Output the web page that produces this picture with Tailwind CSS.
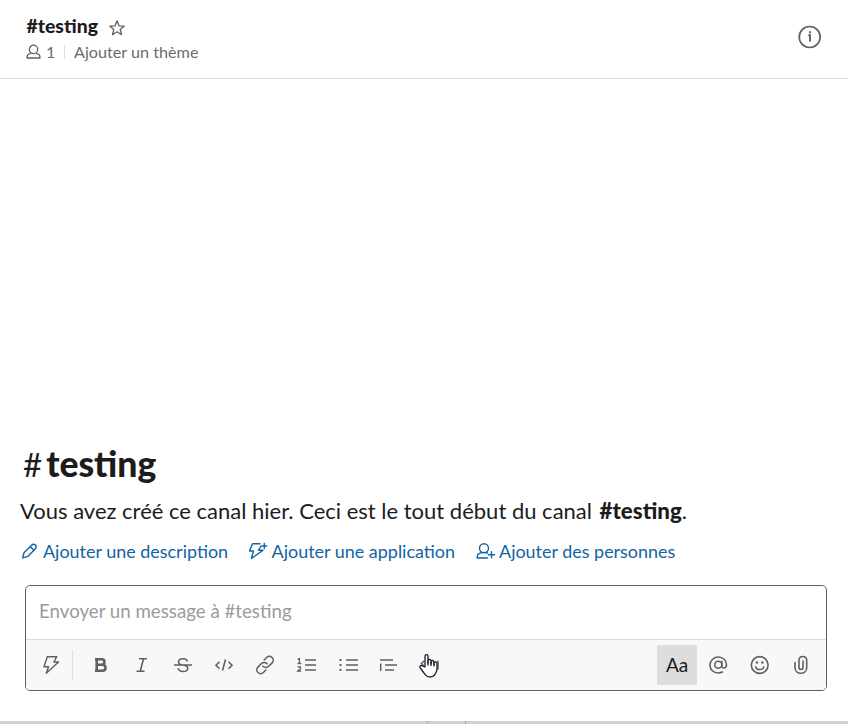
<!DOCTYPE html>
<html lang="fr">
<head>
<meta charset="utf-8">
<title>#testing</title>
<script src="https://cdn.jsdelivr.net/npm/@tailwindcss/browser@4"></script>
</head>
<body class="bg-white font-['Lato',sans-serif] text-[#1d1c1d]">
<div class="flex h-[724px] w-[848px] flex-col overflow-hidden">
  <header class="flex h-[79px] shrink-0 justify-between border-b border-[#dddddd] pl-[26px] pr-[26px]">
    <div class="pt-[14px]">
      <div class="flex h-6 items-center gap-[10px] pl-[0.5px]">
        <h1 class="whitespace-nowrap text-[19.4px] font-black leading-6">#testing</h1>
        <svg class="mt-[3px] size-[18px]" viewBox="0 0 18 18" fill="none" stroke="#616061" stroke-width="1.3" stroke-linejoin="round"><path d="M9 1.800l2 5 5.200.3-4 3.400 1.300 5.200L9 12.800l-4.500 2.900 1.300-5.200-4-3.400 5.200-.3z"/></svg>
      </div>
      <div class="mt-[3px] flex h-[22px] items-center text-[16.2px] leading-[22px] text-[#6c6b6c]">
        <svg class="h-4 w-[15px]" viewBox="0 0 15 16" fill="none" stroke="#616061" stroke-width="1.3" stroke-linejoin="round"><circle cx="7.500" cy="5.400" r="4.200"/><path d="M5 9.300l-2.200.7C1.500 10.500 1 12 1 14h13c0-2-.5-3.500-1.800-4L10 9.300"/></svg>
        <span class="ml-[5px] w-[9px]">1</span>
        <span class="ml-[9px] h-[14px] w-px bg-[#dddddd]"></span>
        <span class="ml-[9px] whitespace-nowrap">Ajouter un thème</span>
      </div>
    </div>
    <svg class="mt-[25px] size-6" viewBox="0 0 24 24" fill="none" stroke="#616061"><circle cx="11.700" cy="12" r="10.500" stroke-width="1.700"/><path d="M10.300 10.200H12v6.300" stroke-width="1.900"/><path d="M11 7.300h2" stroke-width="2"/></svg>
  </header>

  <main class="flex min-h-0 flex-1 flex-col justify-end">
    <section class="h-[143px]">
      <h2 class="flex h-[44px] items-center whitespace-nowrap pl-[23px] text-[35.500px] font-black leading-[44px]"><span class="mr-[4px] text-[33px] font-normal">#</span>testing</h2>
      <p class="mt-[10px] h-[30px] whitespace-nowrap pl-5 text-[22px] leading-[30px]">Vous avez créé ce canal hier. Ceci est le tout début du canal <b class="ml-[2px] text-[22.300px] font-black">#testing</b>.</p>
      <div class="mt-[13px] flex h-6 items-center whitespace-nowrap pl-[21px] text-[17.950px] leading-6 text-[#1264a3]">
        <a class="flex items-center"><svg class="mr-[4px] size-[18px]" viewBox="0 0 18 18" fill="none" stroke="#1264a3" stroke-width="1.400" stroke-linejoin="round" stroke-linecap="round"><path d="M1.700 15.800l1.300-5 7.500-7.500c2.800-2.800 6.500.8 3.700 3.600l-7.500 7.500zM9.200 4.600l3.800 3.600"/></svg>Ajouter une description</a>
        <a class="ml-[20px] flex items-center"><svg class="mr-[3.500px] h-[18px] w-5" viewBox="0 0 20 18" fill="none" stroke="#1264a3" stroke-width="1.400" stroke-linejoin="round" stroke-linecap="round"><path d="M12 1.800H4.500L1.500 9h4l-2 7.500L15 8.300h-4.500L13 4M16.300 1.500v5M13.800 4h5"/></svg>Ajouter une application</a>
        <a class="ml-[20.500px] flex items-center"><svg class="mr-[3.500px] h-[18px] w-5" viewBox="0 0 20 18" fill="none" stroke="#1264a3" stroke-width="1.400" stroke-linejoin="round" stroke-linecap="round"><circle cx="8" cy="6.200" r="4.500"/><path d="M11.500 16H1.200c0-2.500.5-3.900 1.800-4.300l2.500-1M10.500 10.700l1 .5M15.500 9.800v6M12.500 12.800h6"/></svg>Ajouter des personnes</a>
      </div>
    </section>

    <div class="ml-[25px] flex h-[106px] w-[802px] shrink-0 flex-col overflow-hidden rounded-[5px] border border-[#616061]">
      <div class="h-[53px] whitespace-nowrap pl-[13px] pt-[12px] text-[18.700px] leading-[26px] text-[#9b9b9b]">Envoyer un message à #testing</div>
      <div class="flex flex-1 items-center border-t border-[#dddddd] bg-[#f8f8f8] pl-[5px] pr-[5px] text-[#616061]">
        <button class="grid size-10 place-items-center"><svg class="size-5" viewBox="0 0 20 20" fill="none" stroke="currentColor" stroke-width="1.400" stroke-linejoin="round"><path d="M6.300 1.700h9.500l-3 5.300h4.700L5.300 18.200l2.200-6.500H3z"/></svg></button>
        <span class="ml-[1px] h-[30px] w-px bg-[#dddddd]"></span>
        <div class="ml-[8px] flex gap-[1.100px]">
          <button class="grid size-10 place-items-center"><svg class="size-5" viewBox="0 0 20 20" fill="none" stroke="currentColor" stroke-width="2.600"><path d="M4 4.300h6.700c3.700 0 3.700 5.400 0 5.400H5.500h5.800c4.300 0 4.300 6 0 6H4M5.700 3v14"/></svg></button>
          <button class="grid size-10 place-items-center"><svg class="size-5" viewBox="0 0 20 20" fill="none" stroke="currentColor" stroke-width="1.600"><path d="M7 3.700h8M4.500 16.300h8M11.500 3.700L8.200 16.300"/></svg></button>
          <button class="grid size-10 place-items-center"><svg class="size-5" viewBox="0 0 20 20" fill="none" stroke="currentColor" stroke-width="1.500"><path d="M1 10h18M14.500 6.500C14 4.500 12.500 3.700 10 3.700c-3 0-4.500 1.400-4.500 3.200 0 1.700 1.300 2.500 4.500 3.100 3.500.7 4.800 1.500 4.800 3.200 0 2-1.800 3.300-4.800 3.300-2.700 0-4.400-1.200-4.900-3.300"/></svg></button>
          <button class="grid size-10 place-items-center"><svg class="size-5" viewBox="0 0 20 20" fill="none" stroke="currentColor" stroke-width="1.600"><path d="M5.500 6.800L2 10.300l3.500 3.500M14.500 6.800L18 10.300l-3.500 3.500M11.500 4.500l-3 11"/></svg></button>
          <button class="grid size-10 place-items-center"><svg class="size-5" viewBox="0 0 24 24" fill="none" stroke="currentColor" stroke-width="1.900" stroke-linecap="round"><path d="M9.500 13.500a5 5 0 0 0 7 0l4-4a4.500 4.500 0 0 0-6.500-6.500l-3 3M14.500 10.500a5 5 0 0 0-7 0l-4 4a4.500 4.500 0 0 0 6.500 6.500l3-3"/></svg></button>
          <button class="grid size-10 place-items-center"><svg class="size-5" viewBox="0 0 20 20" fill="none" stroke="currentColor" stroke-width="1.500"><path d="M9 5h11M9 10h11M9 15h11"/><path stroke-width="1.300" d="M1.700 4.300l1.700-.8v5M1.500 8.500h3.800M1.700 12.500c.5-1.200 3-1.200 3 .2 0 1.200-2 2-3 3.300h3.500"/></svg></button>
          <button class="grid size-10 place-items-center"><svg class="size-5" viewBox="0 0 20 20" fill="none" stroke="currentColor" stroke-width="1.500"><path d="M8 5h12M8 10h12M8 15h12"/><path stroke-width="2" d="M1.500 5h2M1.500 10h2M1.500 15h2"/></svg></button>
          <button class="grid size-10 place-items-center"><svg class="size-5" viewBox="0 0 20 20" fill="none" stroke="currentColor" stroke-width="1.500"><path d="M1 5h13M6 10h12M6 15h9M1.700 8.500v7.500"/></svg></button>
          <button class="relative grid size-10 place-items-center"><svg class="size-5" viewBox="0 0 20 20" fill="none" stroke="currentColor" stroke-width="1.500"><path d="M4 6L1.500 8.500 4 11M18 5.500v9"/></svg>
            <svg class="absolute left-[9px] top-[8px] h-[26px] w-[20px]" viewBox="0 0 20 26" fill="white" stroke="#1b1b2b" stroke-width="1.300" stroke-linejoin="round" stroke-linecap="round"><path d="M6 14V3.200c0-2.200 3-2.200 3 0V10 7.500c0-1.500 3-1.500 3 .3V11 8.500c0-1.500 3-1.300 3 .5v2.500-1.500c0-1.500 3-1.300 3 .5v5c0 2.500-1 3.500-1.500 5-1 2-3 3.500-5.500 3.500-3 0-4.500-1.500-6-4l-3.700-5c-1.200-2 .8-3.200 2.200-2z"/><path fill="none" d="M9 8v4M12 9v3.500M15 10v3"/></svg>
          </button>
        </div>
        <div class="ml-auto flex gap-[1.300px]">
          <button class="grid size-10 place-items-center rounded-[2px] bg-[#dddddd] text-[19px] leading-6 text-[#1d1c1d]">Aa</button>
          <button class="grid size-10 place-items-center"><svg class="size-5" viewBox="0 0 20 20" fill="none" stroke="currentColor" stroke-width="1.600"><circle cx="10.300" cy="9.700" r="3.500"/><path d="M13.800 5.800v5.400c0 2.800 4.700 2.300 4.700-1.500 0-4.200-3.500-7.700-8-7.700s-8.500 3.300-8.500 8 3.500 8 8.200 8c2 0 3.300-.4 4.700-1.200"/></svg></button>
          <button class="grid size-10 place-items-center"><svg class="size-5" viewBox="0 0 20 20" fill="none" stroke="currentColor" stroke-width="1.600"><circle cx="9.700" cy="10" r="8.400"/><path d="M5.500 11.300c.8 4.300 7.600 4.300 8.400 0"/><circle cx="7" cy="7.500" r="1.200" fill="currentColor" stroke="none"/><circle cx="12.400" cy="7.500" r="1.200" fill="currentColor" stroke="none"/></svg></button>
          <button class="grid size-10 place-items-center"><svg class="size-5" viewBox="0 0 20 20" fill="none" stroke="currentColor" stroke-width="1.600" stroke-linecap="round"><path d="M4 7.500v5.200c0 7.400 11.700 7.400 11.700 0V5.200c0-5-7.700-5-7.700 0v7.300c0 2.600 4 2.600 4 0V6"/></svg></button>
        </div>
      </div>
    </div>
    <footer class="mt-[30px] flex h-[3px] shrink-0 bg-[#cfcfcf]"><span class="ml-[427px] w-px bg-[#b0b0b0]"></span><span class="ml-[37px] w-px bg-[#a0a0a0]"></span></footer>
  </main>
</div>
</body>
</html>
